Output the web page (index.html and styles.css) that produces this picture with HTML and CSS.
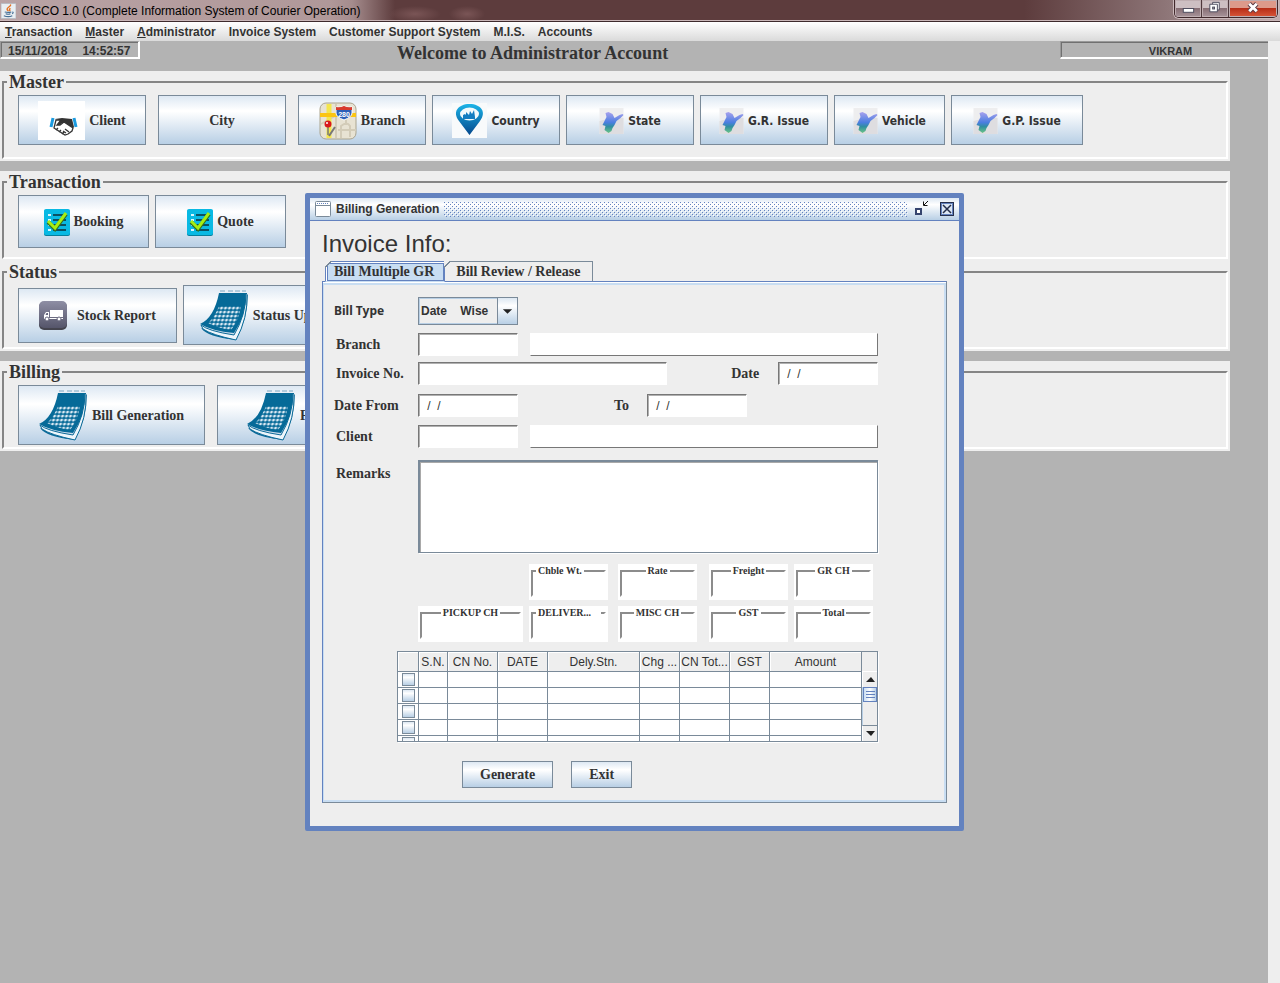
FILE: index.html
```html
<!DOCTYPE html>
<html lang="en">
<head>
<meta charset="utf-8">
<title>CISCO 1.0 (Complete Information System of Courier Operation)</title>
<link rel="stylesheet" href="styles.css">
</head>
<body>
<svg class="defs" width="0" height="0" aria-hidden="true">
  <defs>
    <linearGradient id="pin-fill" x1="0" y1="0" x2="0" y2="1"><stop offset="0" stop-color="#1cb4e8"/><stop offset="1" stop-color="#05488c"/></linearGradient>
    <linearGradient id="map-fill" x1="0" y1="0" x2="0" y2="1"><stop offset="0" stop-color="#a9a2ee"/><stop offset=".5" stop-color="#4a7ee0"/><stop offset=".7" stop-color="#2f8fa0"/><stop offset="1" stop-color="#6cc487"/></linearGradient>
    <linearGradient id="truck-fill" x1="0" y1="0" x2="0" y2="1"><stop offset="0" stop-color="#8e8ea4"/><stop offset="1" stop-color="#55556a"/></linearGradient>
    <pattern id="bumps" width="4" height="4" patternUnits="userSpaceOnUse"><rect width="1" height="1" fill="#6382bf"/><rect x="2" y="2" width="1" height="1" fill="#6382bf"/><rect x="1" y="1" width="1" height="1" fill="#fff"/><rect x="3" y="3" width="1" height="1" fill="#fff"/></pattern>
    <pattern id="days" width="4" height="4" patternUnits="userSpaceOnUse" patternTransform="skewX(-14)"><circle cx="2" cy="2" r="1.5" fill="#dceaf4"/></pattern>
    <symbol id="region" viewBox="0 0 24 26">
      <rect width="24" height="26" fill="#eeeeef"/><path d="M0 13Q12 9 24 10V26H0Z" fill="#dedde0"/>
      <path d="M6 5l3-1 4 2 2 4 5-3 3-1 1 1-3 3-4 3-2 4-2 3-1 3-3 2-4-3 1-4-3-1 2-4 2-4z" fill="url(#map-fill)"/>
    </symbol>
    <symbol id="task" viewBox="0 0 26 27">
      <rect y="1" width="26" height="26" rx="2" fill="#087f9d"/><rect width="26" height="26" rx="2" fill="#09b9e3"/>
      <path d="M9 6h13M9 11h13M9 16h13M9 21h13" stroke="#0b5062" stroke-width="1.8"/><path d="M4 6h3M4 11h3M4 16h3M4 21h3" stroke="#d9f6ff" stroke-width="1.8"/>
      <path d="M4 13l7 7L22 5" fill="none" stroke="#356f20" stroke-width="4"/><path d="M4 12l7 7L22 4" fill="none" stroke="#a6ee12" stroke-width="3"/>
    </symbol>
    <symbol id="calendar" viewBox="0 0 49 51">
      <path d="M2 38Q8 46 35 49Q47 30 47 5" fill="none" stroke="#0b6a98" stroke-width="1.5"/>
      <path d="M1 35Q8 41 34 45Q46 25 46 3L47 4Q48 28 36 50Q12 45 3 39Z" fill="#eef6fb" stroke="#0b6a98"/>
      <path d="M19 3H46Q46 26 34 43Q12 41 0 34Q14 28 19 3Z" fill="#066a98"/>
      <path d="M20 1h5M28 1h5M35 1h5M42 1h4" stroke="#b2cbdc" stroke-width="2"/>
      <path d="M19 16H41Q39 30 31 40Q17 38 8 33Q15 27 19 16Z" fill="url(#days)"/>
    </symbol>
  </defs>
</svg>

<header class="titlebar">
  <svg class="java" viewBox="0 0 16 16" aria-hidden="true"><rect width="16" height="16" fill="#e9eef2" stroke="#b8bcc4"/><path d="M8 8Q5 6 8 4T10 1M10 8Q8 7 10 5" fill="none" stroke="#e76f1c" stroke-width="1.5"/><path d="M4 9q4 1 7 0M5 11q3 1 5 0M12 9q2 0 0 2M3 13q5 2 9 0" fill="none" stroke="#456f96" stroke-width="1.2"/></svg>
  <h1>CISCO 1.0 (Complete Information System of Courier Operation)</h1>
  <div class="caption">
    <button aria-label="Minimize"><svg viewBox="0 0 26 18"><rect x="8" y="9" width="11" height="4" fill="#fff" stroke="#4a4a5c"/></svg></button>
    <button aria-label="Restore"><svg viewBox="0 0 26 18"><path d="M10.500 2.500h7v8h-7z" fill="#fff" stroke="#4a4a5c"/><path d="M7.500 4.500h8v8h-8z" fill="#fff" stroke="#4a4a5c"/><rect x="10.500" y="7.500" width="2" height="2" fill="#aaa" stroke="#4a4a5c"/></svg></button>
    <button class="close" aria-label="Close"><svg viewBox="0 0 48 18"><path d="M20 4l8 8M28 4l-8 8" stroke="#5a3a44" stroke-width="5"/><path d="M20 4l8 8M28 4l-8 8" stroke="#fff" stroke-width="3"/></svg></button>
  </div>
</header>

<nav class="menubar">
  <a href="#"><u>T</u>ransaction</a><a href="#"><u>M</u>aster</a><a href="#"><u>A</u>dministrator</a><a href="#">Invoice System</a><a href="#">Customer Support System</a><a href="#">M.I.S.</a><a href="#">Accounts</a>
</nav>

<main class="desktop">
  <div class="status">
    <div class="clock"><span>15/11/2018</span><span>14:52:57</span></div>
    <h2>Welcome to Administrator Account</h2>
    <div class="user">VIKRAM</div>
  </div>

  <section class="panel">
    <fieldset class="group"><legend>Master</legend>
      <div class="tools">
        <button class="tool std apart"><svg width="47" height="39" viewBox="0 0 47 39"><rect width="47" height="39" fill="#fff"/><path d="M15 17l-2 9M36 17l2 9" stroke="#1b9be0" stroke-width="3"/><path d="M17 18l7-1 10 1 2 8-3 3-9-7-4 3-3-1 4-5z" fill="#333"/><path d="M18 19l-2 8 11 7 3-1 4-3 1-3-9-6-4 3h-3l4-5z" fill="#fff" stroke="#333" stroke-width="1.300"/><path d="M18 29l2-2M21 31l2-2M24 33l2-2M28 32l-3-2M31 31l-4-3" stroke="#333" stroke-width="1.300"/></svg>Client</button>
        <button class="tool std apart">City</button>
        <button class="tool std"><svg width="38" height="38" viewBox="0 0 38 38"><rect x="1" y="1" width="36" height="36" rx="6" fill="#e8e3d3" stroke="#aaa48f"/><path d="M17 2v34M2 22l14-8M22 36V24q6-5 9 0v11M19 28h18M27 15v8" stroke="#d3ccb8" stroke-width="2" fill="none"/><path d="M10 2v34" stroke="#f4e64c" stroke-width="5"/><path d="M1 13h36" stroke="#fbc512" stroke-width="4"/><path d="M17 5q4 1 8-1 4 2 8 1v6q0 4-8 7-8-3-8-7z" fill="#2b5eb8" stroke="#fff"/><path d="M17 5q4 1 8-1 4 2 8 1v3H17z" fill="#d93a2c"/><text x="25" y="15" class="shield">280</text><path d="M10 34l6-9" stroke="#777" stroke-width="2"/><path d="M9 23v10" stroke="#777" stroke-width="1.500"/><circle cx="9" cy="22" r="3.500" fill="#d8171c"/><circle cx="8" cy="21" r="1" fill="#fff"/></svg>Branch</button>
        <button class="tool std sans"><svg width="35" height="35" viewBox="0 0 35 35"><rect width="35" height="35" fill="#f8fafb"/><path d="M17.500 32L7 18C0 9 6 1 17.500 1S35 9 28 18Z" fill="url(#pin-fill)"/><ellipse cx="17.500" cy="11" rx="9.500" ry="6.500" fill="#f2fafc"/><path d="M11 14v-2l2-1 1 1V9l2 2 1 1 1-4 2 3 2-4 1 7v2H11z" fill="#137dc1"/></svg>Country</button>
        <button class="tool std sans"><svg width="25" height="26"><use href="#region"/></svg>State</button>
        <button class="tool std sans"><svg width="25" height="26"><use href="#region"/></svg>G.R. Issue</button>
        <button class="tool slim sans"><svg width="25" height="26"><use href="#region"/></svg>Vehicle</button>
        <button class="tool wide sans"><svg width="25" height="26"><use href="#region"/></svg>G.P. Issue</button>
      </div>
    </fieldset>
  </section>

  <section class="panel">
    <fieldset class="group"><legend>Transaction</legend>
      <div class="tools">
        <button class="tool mid"><svg width="26" height="27"><use href="#task"/></svg>Booking</button>
        <button class="tool mid"><svg width="26" height="27"><use href="#task"/></svg>Quote</button>
      </div>
    </fieldset>
    <fieldset class="group"><legend>Status</legend>
      <div class="tools">
        <button class="tool report"><svg width="28" height="29" viewBox="0 0 28 29"><rect y="1" width="28" height="28" rx="5" fill="#44444e"/><rect width="28" height="27" rx="5" fill="url(#truck-fill)"/><path d="M11 9h13v7H11z" fill="#fff"/><path d="M5 18v-4l2-3h3v7zM8 17h16v1H4z" fill="#fff"/><path d="M6.500 14l1-2H9v2z" fill="#66667c"/><circle cx="8" cy="18" r="2" fill="#fff" stroke="#66667c"/><circle cx="20" cy="18" r="2" fill="#fff" stroke="#66667c"/></svg>Stock Report</button>
        <button class="tool big update"><svg width="49" height="51"><use href="#calendar"/></svg>Status Update</button>
      </div>
    </fieldset>
  </section>

  <section class="panel">
    <fieldset class="group"><legend>Billing</legend>
      <div class="tools">
        <button class="tool big apart"><svg width="49" height="51"><use href="#calendar"/></svg>Bill Generation</button>
        <button class="tool big"><svg width="49" height="51"><use href="#calendar"/></svg>Freight Bills</button>
      </div>
    </fieldset>
  </section>

  <section class="window" aria-label="Billing Generation">
    <header class="window-bar">
      <svg width="16" height="16" viewBox="0 0 16 16" aria-hidden="true"><rect x=".5" y=".5" width="15" height="15" rx="1" fill="#fff" stroke="#7a8a99"/><path d="M1 4.500h14" stroke="#7a8a99"/><path d="M2 2.500h12" stroke="#6382bf" stroke-dasharray="1 1"/></svg>
      <h3>Billing Generation</h3>
      <svg class="bumps" aria-hidden="true"><rect width="100%" height="100%" fill="url(#bumps)"/></svg>
      <button class="frame-btn" aria-label="Restore window"><svg width="16" height="16" viewBox="0 0 16 16"><path d="M3 8h5v5H3z" fill="#fff" stroke="#36446e" stroke-width="2"/><path d="M15 0l-4 4M10.500 .5v4h4" fill="none" stroke="#111"/></svg></button>
      <button class="frame-btn" aria-label="Close window"><svg width="16" height="16" viewBox="0 0 16 16"><rect x="1.500" y="1.500" width="13" height="13" fill="#fff" stroke="#26304c"/><rect x="2.500" y="2.500" width="11" height="11" fill="#dce7f3" stroke="#6382bf"/><path d="M4 4l8 8M12 4l-8 8" stroke="#222b48" stroke-width="1.500"/></svg></button>
    </header>
    <div class="window-body">
      <h4>Invoice Info:</h4>
      <div class="tabs" role="tablist">
        <button class="tab selected" role="tab" aria-selected="true">Bill Multiple GR</button>
        <button class="tab" role="tab" aria-selected="false">Bill Review / Release</button>
      </div>
      <form class="sheet">
        <div class="row">
          <label class="name humanist" for="type">Bill Type</label>
          <span class="combo"><select id="type"><option>Date&nbsp;&nbsp;&nbsp;&nbsp;Wise</option></select><svg viewBox="0 0 20 28" aria-hidden="true"><path d="M5 12h10l-5 5z" fill="#222"/></svg></span>
        </div>
        <div class="row"><label class="name in" for="branch">Branch</label><input class="field code" id="branch"><input class="shown" aria-label="Branch name" readonly></div>
        <div class="row tight"><label class="name in" for="inv">Invoice No.</label><input class="field number" id="inv"><label class="date-name" for="date">Date</label><input class="field code" id="date" value=" /  /"></div>
        <div class="row spaced"><label class="name" for="from">Date From</label><input class="field code" id="from" value=" /  /"><label class="to-name" for="to">To</label><input class="field code" id="to" value=" /  /"></div>
        <div class="row"><label class="name in" for="client">Client</label><input class="field code" id="client"><input class="shown" aria-label="Client name" readonly></div>
        <div class="row loose"><label class="name in top" for="remarks">Remarks</label><textarea id="remarks"></textarea></div>

        <div class="charges">
          <div class="charge second"><fieldset><legend class="left"><label for="c1">Chble Wt.</label></legend><input id="c1"></fieldset></div>
          <div class="charge"><fieldset><legend><label for="c2">Rate</label></legend><input id="c2"></fieldset></div>
          <div class="charge"><fieldset><legend><label for="c3">Freight</label></legend><input id="c3"></fieldset></div>
          <div class="charge"><fieldset><legend><label for="c4">GR CH</label></legend><input id="c4"></fieldset></div>
          <div class="charge pickup"><fieldset><legend><label for="c5">PICKUP CH</label></legend><input id="c5"></fieldset></div>
          <div class="charge"><fieldset><legend class="left long"><label for="c6">DELIVER...</label></legend><input id="c6"></fieldset></div>
          <div class="charge"><fieldset><legend><label for="c7">MISC CH</label></legend><input id="c7"></fieldset></div>
          <div class="charge"><fieldset><legend><label for="c8">GST</label></legend><input id="c8"></fieldset></div>
          <div class="charge"><fieldset><legend><label for="c9">Total</label></legend><input id="c9"></fieldset></div>
        </div>

        <div class="grid">
          <div class="grid-view">
            <table>
              <colgroup><col class="w-check"><col class="w-sn"><col class="w-mid"><col class="w-mid"><col class="w-wide"><col class="w-small"><col class="w-mid"><col class="w-small"><col class="w-wide"></colgroup>
              <thead><tr><th></th><th>S.N.</th><th>CN No.</th><th>DATE</th><th>Dely.Stn.</th><th>Chg ...</th><th>CN Tot...</th><th>GST</th><th>Amount</th></tr></thead>
              <tbody>
                <tr><td><input type="checkbox" aria-label="Row 1"></td><td></td><td></td><td></td><td></td><td></td><td></td><td></td><td></td></tr>
                <tr><td><input type="checkbox" aria-label="Row 2"></td><td></td><td></td><td></td><td></td><td></td><td></td><td></td><td></td></tr>
                <tr><td><input type="checkbox" aria-label="Row 3"></td><td></td><td></td><td></td><td></td><td></td><td></td><td></td><td></td></tr>
                <tr><td><input type="checkbox" aria-label="Row 4"></td><td></td><td></td><td></td><td></td><td></td><td></td><td></td><td></td></tr>
                <tr><td><input type="checkbox" aria-label="Row 5"></td><td></td><td></td><td></td><td></td><td></td><td></td><td></td><td></td></tr>
              </tbody>
            </table>
          </div>
          <div class="scroll">
            <div class="corner"></div>
            <button type="button" aria-label="Scroll up"><svg width="9" height="5"><path d="M0 5h9L5 0z" fill="#222"/></svg></button>
            <div class="track"><div class="thumb"></div></div>
            <button type="button" aria-label="Scroll down"><svg width="9" height="5"><path d="M0 0h9L5 5z" fill="#222"/></svg></button>
          </div>
        </div>

        <div class="actions"><button type="button" class="tool act">Generate</button><button type="button" class="tool act">Exit</button></div>
      </form>
    </div>
  </section>
</main>
</body>
</html>
```

FILE: styles.css
```css
* { box-sizing: border-box; }

body {
  display: flex;
  flex-direction: column;
  min-height: 100vh;
  margin: 0;
  color: #333;
  background: #eee;
  font: bold 12px/16px "Liberation Sans", sans-serif;
}

h1, h2, h3, h4 { margin: 0; font: inherit; }
button, input, select, textarea { margin: 0; color: inherit; font: inherit; }
svg { display: block; flex: none; }
.defs { position: absolute; }

/* application title bar */
.titlebar {
  display: flex;
  align-items: center;
  height: 22px;
  padding-left: 1px;
  border-bottom: 1px solid #3e2a2d;
  box-shadow: inset 0 -1px #c9b6b8;
  background:
    radial-gradient(ellipse 26px 8px at 415px 14px, #7a5556, transparent),
    radial-gradient(ellipse 18px 8px at 467px 14px, #7a5556, transparent),
    linear-gradient(90deg, #b9a3a5 0, #b09899 330px, #a58c8d 352px, #5d3c3d 395px, #5d3c3d 80%, #8d7577 91%, #c0adaf 100%);
}
.java { width: 15px; height: 16px; }
.titlebar h1 {
  flex: 1;
  padding-left: 5px;
  color: #000;
  font: 12px/20px "Liberation Sans", sans-serif;
}
.caption {
  display: flex;
  align-self: flex-start;
  margin-right: 2px;
  border: 1px solid #40282b;
  border-top: 0;
  border-radius: 0 0 5px 5px;
  overflow: hidden;
  box-shadow: 0 0 0 1px #cbb9bb;
}
.caption button {
  width: 27px;
  height: 17px;
  padding: 0;
  border: 0;
  border-right: 1px solid #4e383c;
  background: linear-gradient(#cdbfc2 0 45%, #846b71 45%, #a8949a);
  box-shadow: inset 0 0 0 1px #bfaeb1;
}
.caption .close { width: 48px; border-right: 0; background: linear-gradient(#dd9a8a 0 45%, #b42a14 45%, #d9573a); }
.caption svg { width: 100%; height: 17px; }

.menubar {
  display: flex;
  gap: 13px;
  height: 19px;
  padding: 2px 5px;
  background: linear-gradient(#fff, #dadada);
}
.menubar a { color: inherit; text-decoration: none; }

/* desktop */
.desktop { position: relative; flex: 1; margin-right: 12px; background: #b3b3b3; }
.status { display: flex; align-items: flex-start; height: 30px; }
.clock, .user {
  height: 18px;
  padding-top: 1px;
  border-top: 1px solid #999;
  border-left: 1px solid #999;
  border-bottom: 2px solid #fff;
  box-shadow: inset 1px 1px #707070;
  line-height: 16px;
}
.clock { display: flex; gap: 15px; width: 140px; padding-left: 7px; border-right: 2px solid #fff; }
.user { width: 208px; font-size: 11px; text-align: center; padding-left: 12px; }
.status h2 { flex: 1; padding-left: 257px; font: bold 18px/24px "Liberation Serif", serif; }

.panel { margin: 0 38px 10px 0; padding: 1px 0 2px; background: #eee; }
.group {
  height: 87px;
  margin: 0 2px;
  padding: 0;
  border: 2px solid #fff;
  border-top-color: #858585;
  border-left-color: #858585;
}
.group + .group { margin-top: 3px; }
.group legend { margin-left: 3px; padding: 0 2px; font: bold 18px/20px "Liberation Serif", serif; }
.tools { display: flex; align-items: center; gap: 6px; padding: 3px 14px 0; }

.tool {
  display: flex;
  align-items: center;
  justify-content: center;
  gap: 4px;
  height: 50px;
  padding: 1px 1px 0;
  border: 1px solid #7a8a99;
  background: linear-gradient(#dde8f3, #fff 30%, #fff 32%, #b8cfe5);
  font: bold 14px/18px "Liberation Serif", serif;
}
.sans { font: bold 12px/18px "DejaVu Sans Condensed", "DejaVu Sans", sans-serif; }
.std { width: 128px; }
.slim { width: 111px; }
.wide { width: 132px; }
.mid { width: 131px; height: 53px; }
.report { width: 159px; height: 55px; gap: 10px; }
.big { width: 187px; height: 60px; }
.update { width: 171px; }
.apart { margin-right: 6px; }
.shield { fill: #fff; font: bold 7px "Liberation Sans", sans-serif; text-anchor: middle; }

/* internal frame floating over the desktop */
.window {
  position: absolute;
  top: 152px;
  left: 305px;
  width: 659px;
  border: 5px solid #6382bf;
  border-radius: 2px;
  background: #eee;
}
.window-bar {
  display: flex;
  align-items: center;
  gap: 5px;
  height: 23px;
  padding: 0 4px 0 5px;
  border-bottom: 1px solid #6382bf;
  background: linear-gradient(#dde8f3, #fff 30%, #b8cfe5);
}
.bumps { flex: 1; height: 15px; }
.frame-btn { padding: 0; border: 0; background: none; }
.frame-btn + .frame-btn { margin-left: 5px; }
.window-body { padding: 9px 12px 23px; }
.window-body h4 { font: 24px/28px "Liberation Sans", sans-serif; }

.tabs { display: flex; align-items: flex-end; margin-top: 3px; padding-left: 3px; }
.tab {
  position: relative;
  height: 21px;
  margin-bottom: -1px;
  padding: 0 12px 0 11px;
  border: 1px solid #7a8a99;
  border-left: 0;
  border-bottom: 1px solid #6382bf;
  background: #eee;
  font: bold 14px/18px "Liberation Serif", serif;
}
.tab::before {
  content: "";
  position: absolute;
  top: -1px;
  left: -1px;
  width: 7px;
  height: 7px;
  background: linear-gradient(135deg, #eee 0 4px, #7a8a99 4px 5px, transparent 5px);
}
.tab.selected {
  padding: 0 10px 0 8px;
  border: 1px solid #6382bf;
  border-bottom-color: #c8ddf2;
  background: #c8ddf2;
  box-shadow: inset 1px 1px #fff, inset 2px 2px #6382bf, inset -1px -1px #6382bf;
}
.sheet {
  min-height: 522px;
  padding: 13px 68px 14px 10px;
  border: 1px solid #7a8a99;
  border-top-color: #6382bf;
  border-left-color: #6382bf;
  box-shadow: inset 0 1px #fff, inset 1px 0 #c8ddf2, inset -2px -2px #c8ddf2, inset 0 3px #c8ddf2;
  font: bold 14px/18px "Liberation Serif", serif;
}
.row { display: flex; align-items: center; margin-top: 8px; }
.row:first-child { margin-top: 2px; }
.row.tight { margin-top: 6px; }
.row.spaced { margin-top: 9px; }
.row.loose { margin-top: 12px; }
.name { flex: none; width: 85px; padding-left: 1px; }
.name.in { padding-left: 3px; }
.name.top { align-self: flex-start; padding-top: 5px; }
.humanist { font: bold 12px/18px "Noto Sans", sans-serif; }
.date-name { width: 111px; padding-left: 64px; }
.to-name { width: 129px; padding-left: 96px; }

.combo {
  display: flex;
  width: 100px;
  height: 28px;
  border: 1px solid #7a8a99;
  box-shadow: inset 0 0 0 1px #b8cfe5;
  font: bold 12px/16px "Liberation Sans", sans-serif;
}
.combo select { flex: 1; min-width: 0; padding: 0 2px; border: 0; background: none; appearance: none; }
.combo svg { width: 20px; height: 26px; border-left: 1px solid #7a8a99; background: linear-gradient(#dde8f3, #fff 30%, #b8cfe5); }

.field, .shown { height: 23px; background: #fff; border: 1px solid #fff; padding: 0 5px; font: 12px/16px "Liberation Sans", sans-serif; white-space: pre; }
.field { border-top-color: #777; border-left-color: #777; box-shadow: inset 1px 1px #b0b0b0; }
.code { width: 100px; }
.number { width: 250px; }
.shown { flex: 1; margin-left: 12px; border-right: 1px solid #777; border-bottom: 1px solid #777; }
textarea {
  flex: 1;
  height: 93px;
  resize: none;
  border: 1px solid #7a8a99;
  border-top-width: 2px;
  border-left-width: 2px;
  box-shadow: inset 1px 1px #a9a9a9, 1px 1px #fff;
  background: #fff;
}

.charges {
  display: grid;
  grid-template-columns: 111px 89px 91px 85px 79px;
  row-gap: 6px;
  margin: 11px 0 0 85px;
}
.charge { width: 79px; height: 36px; padding: 1px 2px 2px; background: #fff; }
.charge.second { grid-column: 2; }
.charge.pickup { width: 105px; }
.charge fieldset { height: 32px; min-width: 0; margin: 0; padding: 0; border: 2px solid #fff; border-top-color: #8c8c8c; border-left-color: #8c8c8c; }
.charge legend { margin: 0 auto; padding: 0 2px; font: bold 10px/12px "Liberation Serif", serif; }
.charge legend.left { margin-left: 3px; }
.charge legend.long { width: 65px; }
.charge input { display: block; width: 100%; height: 16px; padding: 0; border: 0; background: #fff; }

/* charge table */
.grid {
  display: flex;
  height: 91px;
  margin: 9px 0 0 64px;
  border: 1px solid #7a8a99;
  box-shadow: 1px 1px #fff;
}
.grid-view { flex: 1; min-width: 0; overflow: hidden; background: #fff; }
table { width: 100%; table-layout: fixed; border-collapse: separate; border-spacing: 0; font: 12px/16px "Liberation Sans", sans-serif; }
th { height: 20px; padding: 1px 0 0; overflow: hidden; font-weight: normal; white-space: nowrap; background: #eee; box-shadow: inset 1px 1px #fff; }
th, td { border-right: 1px solid #7a8a99; border-bottom: 1px solid #7a8a99; text-align: center; }
td { height: 16px; padding: 0; line-height: 0; }
td input { display: block; width: 13px; height: 13px; margin: 0 auto; appearance: none; border: 1px solid #7a8a99; background: linear-gradient(#dde8f3, #fff 30%, #b8cfe5); }
.w-check { width: 21px; }
.w-sn { width: 29px; }
.w-small { width: 40px; }
.w-mid { width: 50px; }
.w-wide { width: 92px; }
.scroll { display: flex; flex-direction: column; width: 15px; }
.corner { height: 20px; border-bottom: 1px solid #fff; }
.scroll button { display: flex; align-items: center; justify-content: center; height: 15px; padding: 0; border: 0; border-left: 1px solid #fff; background: #eee; }
.track { flex: 1; border-bottom: 1px solid #7a8a99; border-left: 1px solid #b8cfe5; }
.thumb { height: 15px; border: 1px solid #6382bf; background: repeating-linear-gradient(#6382bf 0 1px, transparent 1px 3px) center / 9px 7px no-repeat, linear-gradient(90deg, #c8ddf2, #fff, #b8cfe5); }

.actions { display: flex; gap: 18px; margin: 19px 0 0 129px; }
.act { height: 27px; padding: 0 17px; }
```
